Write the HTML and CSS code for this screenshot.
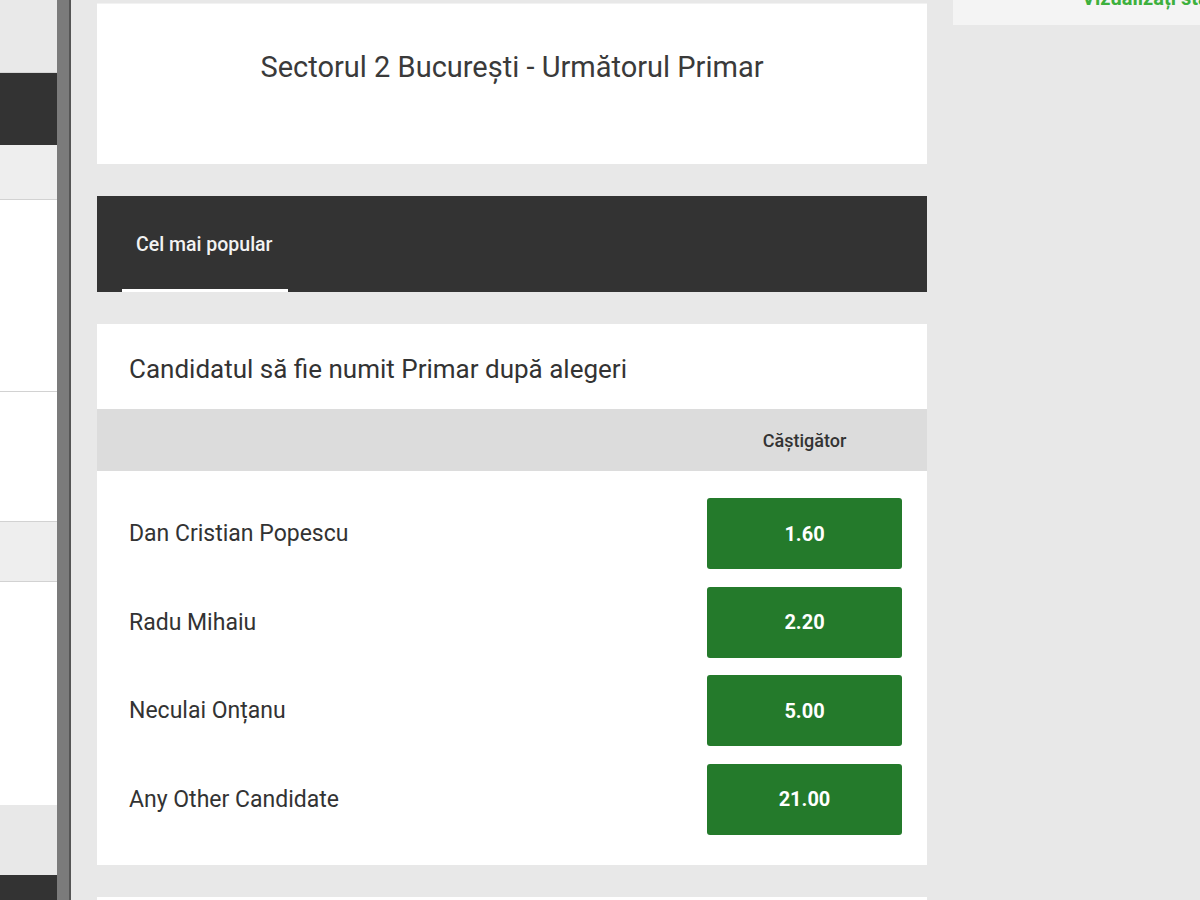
FILE: index.html
```html
<!DOCTYPE html>
<html lang="ro">
<head>
<meta charset="utf-8">
<title>Sectorul 2 București - Următorul Primar</title>
<link rel="stylesheet" href="styles.css">
</head>
<body>
  <div class="left-panel">
    <div class="lp lp-top"></div>
    <div class="lp lp-dark"></div>
    <div class="lp lp-light lp-a"></div>
    <div class="lp lp-white lp-b"></div>
    <div class="lp lp-white lp-c"></div>
    <div class="lp lp-light lp-d"></div>
    <div class="lp lp-white lp-e"></div>
    <div class="lp lp-grey"></div>
    <div class="lp lp-dark2"></div>
  </div>
  <div class="scrollbar"></div>
  <main class="main">
    <section class="card title-card">
      <h1 class="event-title">Sectorul 2 București - Următorul Primar</h1>
    </section>
    <nav class="tabs">
      <div class="tab tab-active">Cel mai popular</div>
    </nav>
    <section class="card market">
      <h2 class="market-title">Candidatul să fie numit Primar după alegeri</h2>
      <div class="market-head">
        <div class="col-label">Căștigător</div>
      </div>
      <div class="rows">
        <div class="row"><span class="name">Dan Cristian Popescu</span><button class="odd">1.60</button></div>
        <div class="row"><span class="name">Radu Mihaiu</span><button class="odd">2.20</button></div>
        <div class="row"><span class="name">Neculai Onțanu</span><button class="odd">5.00</button></div>
        <div class="row"><span class="name">Any Other Candidate</span><button class="odd">21.00</button></div>
      </div>
    </section>
    <section class="card next-card"></section>
  </main>
  <aside class="sidebar">
    <div class="side-card">
      <a class="side-link">Vizualizați statistici</a>
    </div>
  </aside>
</body>
</html>
```
FILE: styles.css
```css
html, body {
  margin: 0;
  padding: 0;
}
body {
  width: 1200px;
  height: 900px;
  overflow: hidden;
  background: #e8e8e8;
  font-family: Roboto, "Noto Sans", "Liberation Sans", sans-serif;
  display: flex;
  align-items: flex-start;
}
.left-panel {
  width: 57px;
  flex: none;
  display: flex;
  flex-direction: column;
}
.lp { box-sizing: border-box; }
.lp-top { height: 73px; background: #e9e9e9; border-bottom: 1px solid #d6d6d6; }
.lp-dark { height: 72px; background: #333333; }
.lp-light { background: #eeeeee; border-bottom: 1px solid #d2d2d2; }
.lp-white { background: #ffffff; border-bottom: 1px solid #d2d2d2; }
.lp-a { height: 55px; }
.lp-b { height: 192px; }
.lp-c { height: 130px; }
.lp-d { height: 60px; }
.lp-e { height: 223px; border-bottom: none; }
.lp-grey { height: 70px; background: #e8e8e8; }
.lp-dark2 { height: 25px; background: #333333; }

.scrollbar {
  width: 12px;
  height: 900px;
  flex: none;
  background: #7b7b7b;
  border-right: 2px solid #555555;
}

.main {
  width: 830px;
  height: 900px;
  overflow: hidden;
  flex: none;
  margin-left: 26px;
  padding-top: 3px;
  box-sizing: border-box;
  display: flex;
  flex-direction: column;
  gap: 32px;
}
.card {
  background: #ffffff;
  box-sizing: border-box;
  flex: none;
}
.title-card {
  height: 161px;
  padding-top: 46px;
  text-align: center;
  border-top: 1px solid #f2f2f2;
}
.event-title {
  margin: 0;
  font-size: 29px;
  line-height: 34px;
  font-weight: 400;
  color: #3a3a3a;
}

.tabs {
  height: 96px;
  flex: none;
  background: #333333;
  padding-left: 25px;
  display: flex;
  box-sizing: border-box;
}
.tab {
  padding: 3px 15px 0 14px;
  display: flex;
  align-items: center;
  font-size: 19.5px;
  font-weight: 500;
  color: #f2f2f2;
  box-sizing: border-box;
}
.tab-active {
  border-bottom: 3px solid #ffffff;
}

.market-title {
  margin: 0;
  height: 85px;
  padding: 5px 0 0 32px;
  box-sizing: border-box;
  font-size: 26px;
  line-height: 80px;
  font-weight: 400;
  color: #333333;
}
.market-head {
  height: 62px;
  background: #dcdcdc;
  display: flex;
  justify-content: flex-end;
  padding-right: 25px;
}
.col-label {
  width: 195px;
  text-align: center;
  font-size: 18px;
  font-weight: 500;
  line-height: 64px;
  color: #333333;
}
.rows {
  padding: 27px 25px 30.5px 32px;
  display: flex;
  flex-direction: column;
  gap: 17.5px;
}
.row {
  height: 71px;
  display: flex;
  justify-content: space-between;
  align-items: center;
}
.name {
  font-size: 23px;
  color: #333333;
}
.odd {
  width: 195px;
  height: 71px;
  border: none;
  border-radius: 3px;
  background: #247a2b;
  color: #ffffff;
  font-family: Roboto, "Noto Sans", "Liberation Sans", sans-serif;
  font-size: 20px;
  font-weight: 700;
  padding: 0;
}
.next-card {
  height: 40px;
}

.sidebar {
  width: 247px;
  flex: none;
  margin-left: 26px;
}
.side-card {
  height: 25px;
  background: #f4f4f4;
  overflow: hidden;
  padding-left: 129px;
  box-sizing: border-box;
}
.side-link {
  display: block;
  margin-top: -12px;
  white-space: nowrap;
  font-size: 20px;
  line-height: 20px;
  font-weight: 700;
  color: #3db03d;
}
```
